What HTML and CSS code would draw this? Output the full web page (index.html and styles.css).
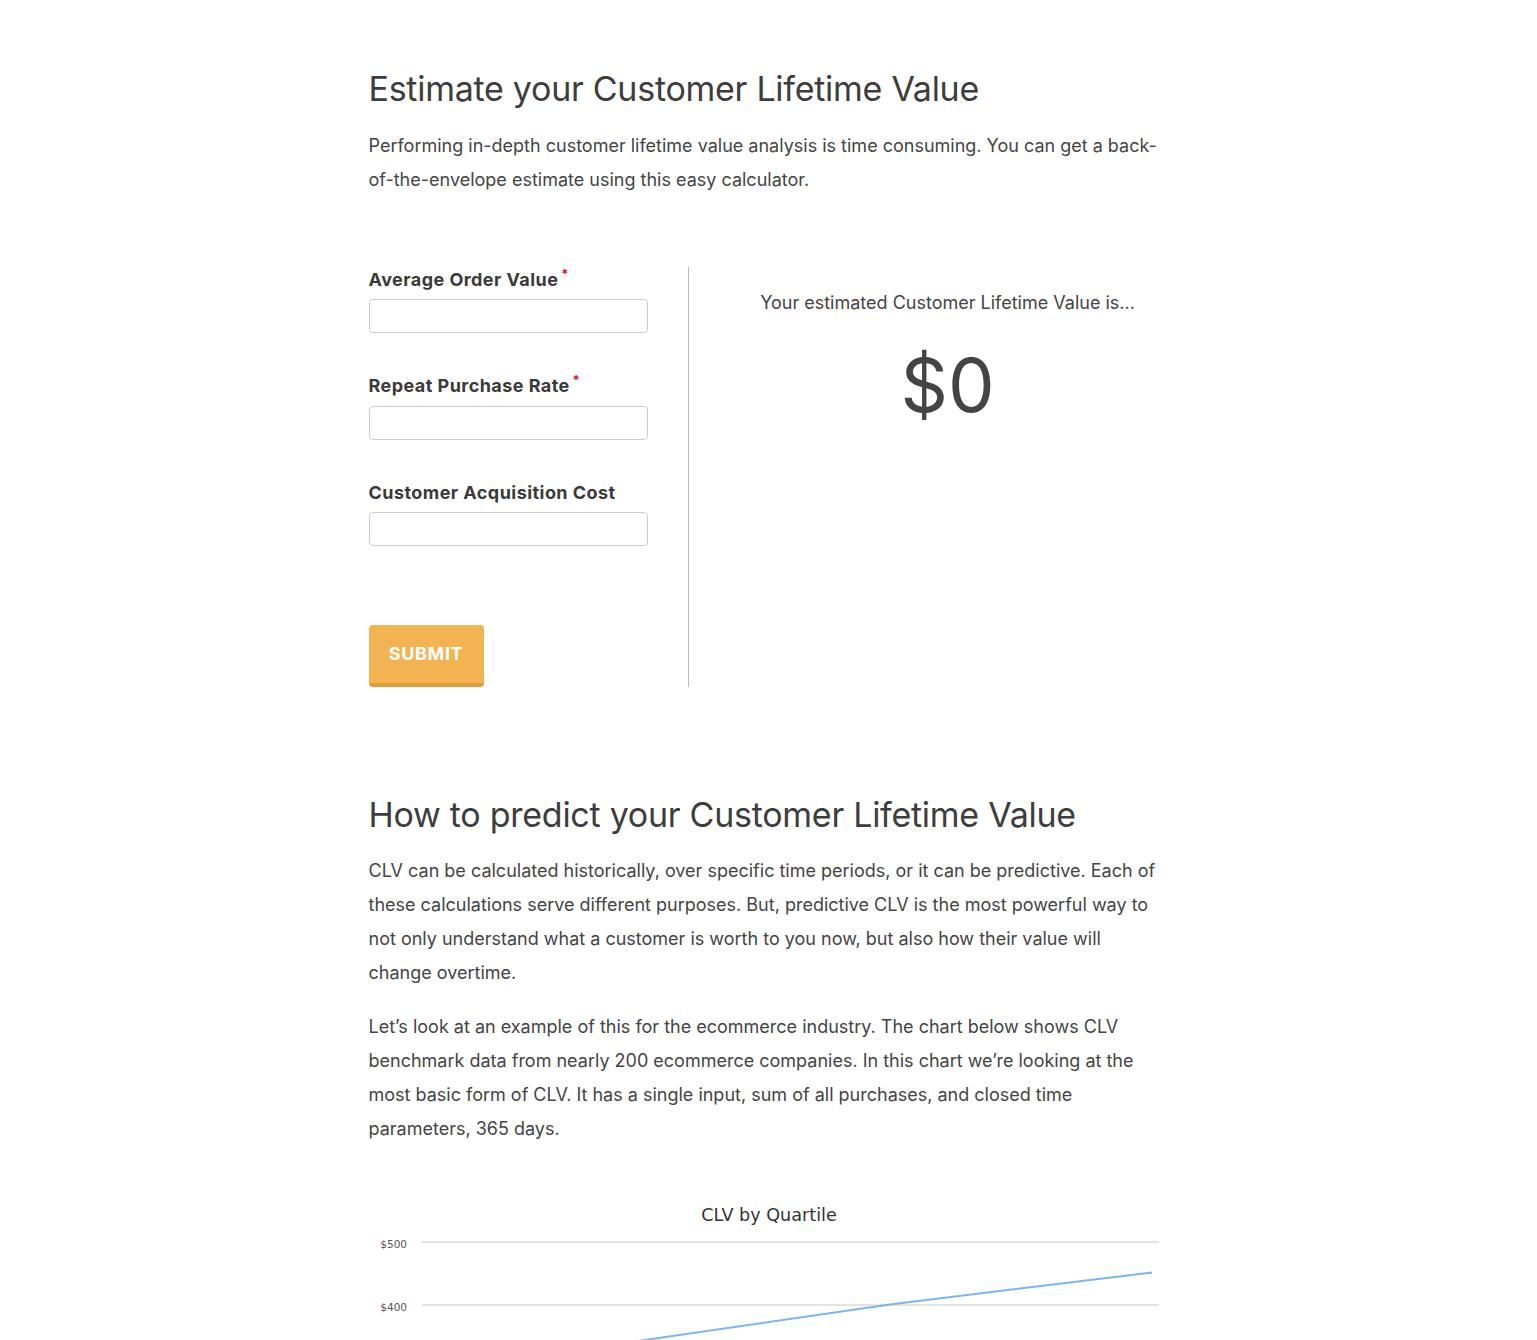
FILE: index.html
```html
<!DOCTYPE html>
<html>
<head>
<meta charset="utf-8">
<link rel="stylesheet" href="styles.css">
</head>
<body>
<main class="page">
  <h1 class="title">Estimate your Customer Lifetime Value</h1>
  <p class="text">Performing in-depth customer lifetime value analysis is time consuming. You can get a back-of-the-envelope estimate using this easy calculator.</p>

  <section class="calc">
    <form class="form">
      <div class="field">
        <label class="label">Average Order Value<span class="req">*</span></label>
        <input class="input" type="text">
      </div>
      <div class="field">
        <label class="label">Repeat Purchase Rate<span class="req">*</span></label>
        <input class="input" type="text">
      </div>
      <div class="field">
        <label class="label">Customer Acquisition Cost</label>
        <input class="input" type="text">
      </div>
      <button class="submit" type="button">SUBMIT</button>
    </form>
    <div class="result">
      <p class="result-label">Your estimated Customer Lifetime Value is...</p>
      <p class="result-value">$0</p>
    </div>
  </section>

  <h2 class="title title-2">How to predict your Customer Lifetime Value</h2>
  <p class="text">CLV can be calculated historically, over specific time periods, or it can be predictive. Each of these calculations serve different purposes. But, predictive CLV is the most powerful way to not only understand what a customer is worth to you now, but also how their value will change overtime.</p>
  <p class="text">Let’s look at an example of this for the ecommerce industry. The chart below shows CLV benchmark data from nearly 200 ecommerce companies. In this chart we’re looking at the most basic form of CLV. It has a single input, sum of all purchases, and closed time parameters, 365 days.</p>

  <div class="chart">
    <svg class="chart-svg" width="800" height="220" viewBox="0 0 800 220">
      <text class="chart-title" x="400" y="54.5" text-anchor="middle">CLV by Quartile</text>
      <line class="grid" x1="53" y1="76" x2="790" y2="76"/>
      <line class="grid" x1="53" y1="139" x2="790" y2="139"/>
      <line class="grid" x1="53" y1="202" x2="790" y2="202"/>
      <text class="axis" x="38" y="82" text-anchor="end">$500</text>
      <text class="axis" x="38" y="145" text-anchor="end">$400</text>
      <polyline class="series" points="250,177.7 521,138.5 783,106.5"/>
    </svg>
  </div>
</main>
</body>
</html>
```
FILE: styles.css
```css
html, body {
  margin: 0;
  padding: 0;
  background: #fff;
}
body {
  font-family: Inter, "Open Sans", Arial, sans-serif;
  color: #444;
}
.page {
  width: 800px;
  margin: 0 auto;
  padding-top: 67px;
}
.title {
  font-size: 34px;
  font-weight: 400;
  line-height: 44px;
  margin: 0 0 17.5px 0;
  color: #3d3d3d;
  letter-spacing: -0.27px;
}
.text {
  font-size: 18px;
  line-height: 34px;
  margin: 0 0 20px 0;
  color: #444;
}
.calc {
  display: flex;
  align-items: flex-start;
  margin-top: 70px;
  margin-bottom: 106px;
}
.form {
  width: 319px;
  border-right: 1px solid #bbb;
  display: flex;
  flex-direction: column;
  align-items: flex-start;
}
.field {
  display: flex;
  flex-direction: column;
  margin-bottom: 40px;
}
.label {
  font-weight: 700;
  font-size: 18px;
  line-height: 26px;
  color: #3a3a3a;
  letter-spacing: 0.45px;
  margin: 0 0 6.5px 0;
}
.req {
  color: #e8000b;
  font-size: 12px;
  line-height: 12px;
  vertical-align: top;
  margin-left: 3px;
  position: relative;
  top: 1px;
}
.input {
  width: 279px;
  height: 34px;
  box-sizing: border-box;
  border: 1px solid #ccc;
  border-radius: 4px;
  padding: 4px 8px;
  font-size: 16px;
  background: #fff;
  margin: 0;
}
.submit {
  margin-top: 38.5px;
  width: 115px;
  height: 62px;
  box-sizing: border-box;
  background: #f3b352;
  border: none;
  border-bottom: 4px solid #de9c3c;
  border-radius: 4px;
  color: #fff;
  font-family: Inter, "Open Sans", Arial, sans-serif;
  font-weight: 700;
  font-size: 18px;
  letter-spacing: 0.6px;
  padding: 0;
}
.result {
  flex: 1;
  text-align: center;
  padding-left: 38px;
  padding-top: 23px;
}
.result-label {
  margin: 0;
  font-size: 18px;
  line-height: 26px;
  color: #444;
}
.result-value {
  margin: 24.5px 0 0 0;
  font-size: 74px;
  line-height: 90px;
  color: #444;
  font-weight: 400;
}
.chart {
  margin-top: 20px;
}
.chart-svg {
  display: block;
}
.chart-title {
  font-family: "DejaVu Sans", sans-serif;
  font-size: 17.6px;
  fill: #333;
}
.axis {
  font-family: "DejaVu Sans", sans-serif;
  font-size: 10.5px;
  fill: #555;
}
.grid {
  stroke: #c8c8c8;
  stroke-width: 1;
}
.series {
  stroke: #7cb5ec;
  stroke-width: 2;
  fill: none;
}
```
